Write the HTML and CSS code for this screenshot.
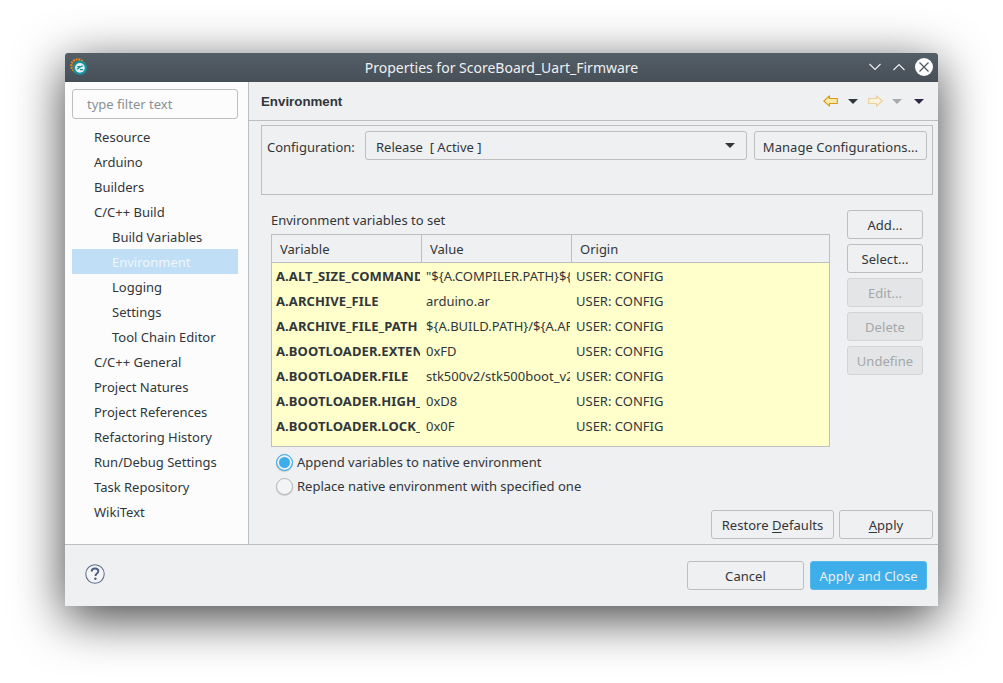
FILE: index.html
```html
<!DOCTYPE html>
<html lang="en">
<head>
    <meta charset="UTF-8">
    <link rel="stylesheet" href="styles.css">
    <title>Properties for ScoreBoard_Uart_Firmware</title>
</head>
<body>
    <div class="window">
        <div class="titlebar">
            <svg class="app_icon" width="18" height="18" viewBox="0 0 20 20">
                <circle cx="8.5" cy="8.5" r="7" fill="none" stroke="#e8891c" stroke-width="2.6" stroke-dasharray="2 1"/>
                <circle cx="11" cy="11" r="8" fill="#17929c"/>
                <circle cx="11" cy="11" r="5.4" fill="#e6f3f4"/>
                <path d="M7.5 12.5 L14 8.5 M8 9.5 h3 M11 13 h3.5" stroke="#17929c" stroke-width="1.4" fill="none"/>
            </svg>
            <span class="title">Properties for ScoreBoard_Uart_Firmware</span>
            <div class="win_btns">
                <svg width="12" height="8" viewBox="0 0 12 8"><path d="M0.5 1 L6 6.5 L11.5 1" fill="none" stroke="#eef1f3" stroke-width="1.1"/></svg>
                <svg class="up" width="12" height="8" viewBox="0 0 12 8"><path d="M0.5 7 L6 1.5 L11.5 7" fill="none" stroke="#eef1f3" stroke-width="1.1"/></svg>
                <svg width="18" height="18" viewBox="0 0 18 18"><circle cx="9" cy="9" r="9" fill="#fcfcfc"/><path d="M4.5 4.5 L13.5 13.5 M13.5 4.5 L4.5 13.5" stroke="#4d5760" stroke-width="1.2"/></svg>
            </div>
        </div>

        <div class="main">
            <div class="sidebar">
                <input class="filter" type="text" placeholder="type filter text">
                <ul class="tree">
                    <li>Resource</li>
                    <li>Arduino</li>
                    <li>Builders</li>
                    <li>C/C++ Build</li>
                    <li class="sub">Build Variables</li>
                    <li class="sub selected">Environment</li>
                    <li class="sub">Logging</li>
                    <li class="sub">Settings</li>
                    <li class="sub">Tool Chain Editor</li>
                    <li>C/C++ General</li>
                    <li>Project Natures</li>
                    <li>Project References</li>
                    <li>Refactoring History</li>
                    <li>Run/Debug Settings</li>
                    <li>Task Repository</li>
                    <li>WikiText</li>
                </ul>
            </div>

            <div class="content">
                <div class="page_head">
                    <h1>Environment</h1>
                    <div class="nav_icons">
                        <svg width="15" height="12" viewBox="0 0 15 12"><path d="M0.8 6 L6.5 0.8 V3.5 H14.3 V8.5 H6.5 V11.2 Z" fill="#fbe9a6" stroke="#d79a1e" stroke-width="1.1" stroke-linejoin="round"/></svg>
                        <i class="caret dark"></i>
                        <svg width="15" height="12" viewBox="0 0 15 12"><path d="M14.2 6 L8.5 0.8 V3.5 H0.7 V8.5 H8.5 V11.2 Z" fill="#faf3dc" stroke="#e8cf9c" stroke-width="1.1" stroke-linejoin="round"/></svg>
                        <i class="caret grey"></i>
                        <i class="caret purple"></i>
                    </div>
                </div>

                <div class="config_group">
                    <label class="config_label">Configuration:</label>
                    <div class="combo">
                        <span>Release&nbsp; [ Active ]</span>
                        <i class="caret dark"></i>
                    </div>
                    <button class="btn manage">Manage Configurations...</button>
                </div>

                <div class="env_section">
                    <div class="env_left">
                        <div class="env_title">Environment variables to set</div>
                        <div class="table">
                            <div class="thead">
                                <div class="th col1">Variable</div>
                                <div class="th col2">Value</div>
                                <div class="th col3">Origin</div>
                            </div>
                            <div class="tbody">
                                <div class="row"><div class="var">A.ALT_SIZE_COMMAND.PATTERN</div><div class="val">"${A.COMPILER.PATH}${A.COMPILER.SIZE}</div><div class="org">USER: CONFIG</div></div>
                                <div class="row"><div class="var">A.ARCHIVE_FILE</div><div class="val">arduino.ar</div><div class="org">USER: CONFIG</div></div>
                                <div class="row"><div class="var">A.ARCHIVE_FILE_PATH</div><div class="val">${A.BUILD.PATH}/${A.ARCHIVE_FILE}</div><div class="org">USER: CONFIG</div></div>
                                <div class="row"><div class="var">A.BOOTLOADER.EXTENDED</div><div class="val">0xFD</div><div class="org">USER: CONFIG</div></div>
                                <div class="row"><div class="var">A.BOOTLOADER.FILE</div><div class="val">stk500v2/stk500boot_v2_mega</div><div class="org">USER: CONFIG</div></div>
                                <div class="row"><div class="var">A.BOOTLOADER.HIGH_FUSES</div><div class="val">0xD8</div><div class="org">USER: CONFIG</div></div>
                                <div class="row"><div class="var">A.BOOTLOADER.LOCK_BITS</div><div class="val">0x0F</div><div class="org">USER: CONFIG</div></div>
                            </div>
                        </div>
                        <div class="radios">
                            <label class="radio_row"><i class="radio on"></i>Append variables to native environment</label>
                            <label class="radio_row"><i class="radio"></i>Replace native environment with specified one</label>
                        </div>
                    </div>
                    <div class="side_btns">
                        <button class="btn">Add...</button>
                        <button class="btn">Select...</button>
                        <button class="btn disabled">Edit...</button>
                        <button class="btn disabled">Delete</button>
                        <button class="btn disabled">Undefine</button>
                    </div>
                </div>

                <div class="page_btns">
                    <button class="btn restore">Restore <u>D</u>efaults</button>
                    <button class="btn apply"><u>A</u>pply</button>
                </div>
            </div>
        </div>

        <div class="footer">
            <svg class="help" width="20" height="20" viewBox="0 0 21 21">
                <circle cx="10.5" cy="10.5" r="9.7" fill="#f4f4f5" stroke="#5b6d8f" stroke-width="1.1"/>
                <path d="M7 8 C7 5.6 8.8 4.8 10.5 4.8 C12.6 4.8 14 6 14 7.7 C14 10 11 10 11 12.5" fill="none" stroke="#4c5f85" stroke-width="2"/>
                <circle cx="10.9" cy="15.6" r="1.3" fill="#4c5f85"/>
            </svg>
            <div class="footer_btns">
                <button class="btn cancel">Cancel</button>
                <button class="btn primary">Apply and Close</button>
            </div>
        </div>
    </div>
</body>
</html>
```

FILE: styles.css
```css
*{
    box-sizing: border-box;
}
body{
    margin: 0;
    height: 683px;
    padding: 53px 65px 0;
    background: #ffffff;
    overflow: hidden;
    font-family: "Noto Sans", sans-serif;
    font-size: 13px;
    color: #31363b;
}
.window{
    width: 873px;
    height: 553px;
    display: flex;
    flex-direction: column;
    background: #eff0f1;
    border-radius: 3px 3px 0 0;
    box-shadow: 0 12px 50px rgba(0,0,0,0.75);
}

/* title bar */
.titlebar{
    height: 29px;
    flex: none;
    display: flex;
    align-items: center;
    justify-content: center;
    position: relative;
    background: linear-gradient(#545e67, #475057);
    border-radius: 3px 3px 0 0;
    color: #eff0f1;
    font-size: 14px;
}
.app_icon{
    position: absolute;
    left: 5px;
    top: 5px;
}
.win_btns{
    position: absolute;
    right: 5px;
    top: 5px;
    display: flex;
    align-items: center;
    gap: 10px;
}
.win_btns .up{
    margin-left: 2px;
}

/* main area */
.main{
    height: 463px;
    flex: none;
    display: flex;
    border-bottom: 1px solid #bcbebf;
}
.sidebar{
    width: 184px;
    flex: none;
    padding: 7px 10px 0 7px;
    background: #fcfcfc;
    border-right: 1px solid #bcbebf;
}
.filter{
    display: block;
    width: 166px;
    height: 30px;
    padding: 0 14px;
    border: 1px solid #bcbebf;
    border-radius: 3px;
    background: #fcfcfc;
    outline: none;
    font: inherit;
}
.filter::placeholder{
    color: #8a9095;
    opacity: 1;
}
.tree{
    list-style: none;
    margin: 5px 0 0;
    padding: 0;
}
.tree li{
    height: 25px;
    line-height: 27px;
    padding-left: 22px;
}
.tree li.sub{
    padding-left: 40px;
}
.tree li.selected{
    background: #c0dff6;
    color: #eff6fc;
}

.content{
    flex: 1;
    min-width: 0;
}
.page_head{
    height: 39px;
    display: flex;
    align-items: center;
    justify-content: space-between;
    padding: 0 13px 0 12px;
    border-bottom: 1px solid #bcbebf;
}
h1{
    margin: 0;
    font-size: 13.3px;
    font-weight: 700;
    font-family: "Liberation Sans", sans-serif;
}
.nav_icons{
    display: flex;
    align-items: center;
}
.nav_icons .caret{
    margin: 0 10px 0 10px;
}
.nav_icons .caret.grey{
    margin: 0 0 0 9px;
}
.nav_icons .caret.purple{
    margin: 0 1px 0 12px;
}
.caret{
    display: inline-block;
    width: 0;
    height: 0;
    border-left: 5px solid transparent;
    border-right: 5px solid transparent;
    border-top: 5px solid #31363b;
}
.caret.grey{
    border-top-color: #a8a9aa;
}
.caret.purple{
    border-top-color: #2f2545;
}

.config_group{
    height: 70px;
    margin: 4px 5px 0 12px;
    padding: 5px 5px 0 5px;
    border: 1px solid #bcbebf;
    display: flex;
    align-items: flex-start;
}
.config_label{
    width: 98px;
    flex: none;
    line-height: 33px;
}
.combo{
    width: 382px;
    height: 29px;
    flex: none;
    display: flex;
    align-items: center;
    justify-content: space-between;
    padding: 2px 11px 0 10px;
    border: 1px solid #bcbebf;
    border-radius: 3px;
}
.combo .caret{
    margin-top: -2px;
}
.btn{
    height: 29px;
    padding: 0;
    border: 1px solid #bcbebf;
    border-radius: 3px;
    background: #eff0f1;
    color: #31363b;
    font: inherit;
    letter-spacing: 0.05px;
}
.btn u{
    text-underline-offset: 2px;
}
.manage{
    width: 173px;
    margin-left: 7px;
    padding-top: 2px;
}

.env_section{
    display: flex;
    margin-top: 14px;
    padding-left: 22px;
}
.env_left{
    width: 559px;
    flex: none;
}
.env_title{
    height: 25px;
    line-height: 22px;
}
.table{
    border: 1px solid #bcbebf;
}
.thead{
    height: 28px;
    display: flex;
    border-bottom: 1px solid #bcbebf;
}
.th{
    line-height: 29px;
    padding-left: 8px;
    border-right: 1px solid #bcbebf;
}
.th.col1, .th.col2{
    width: 150px;
}
.th.col3{
    flex: 1;
    border-right: none;
}
.tbody{
    height: 183px;
    padding-top: 1px;
    background: #ffffcc;
}
.row{
    height: 25px;
    line-height: 25px;
    display: flex;
}
.var{
    width: 148px;
    padding-left: 4px;
    font-weight: 700;
    letter-spacing: 0.1px;
    white-space: nowrap;
    overflow: hidden;
}
.val{
    width: 144px;
    margin-left: 6px;
    white-space: nowrap;
    overflow: hidden;
}
.org{
    margin-left: 6px;
    white-space: nowrap;
}
.radios{
    margin-top: 3px;
    padding-left: 5px;
}
.radio_row{
    height: 24px;
    display: flex;
    align-items: center;
}
.radio{
    width: 17px;
    height: 17px;
    margin-right: 4px;
    flex: none;
    border: 1px solid #b4b6b8;
    border-radius: 50%;
    background: #f3f4f4;
    box-shadow: 0 1px 1px rgba(0,0,0,0.15);
}
.radio.on{
    border-color: #3daee9;
    background: #3daee9;
    box-shadow: inset 0 0 0 2px #eff0f1, 0 1px 1px rgba(0,0,0,0.15);
}
.side_btns{
    width: 76px;
    margin-left: 17px;
    display: flex;
    flex-direction: column;
    gap: 5px;
    margin-top: 1px;
}
.side_btns .btn{
    width: 76px;
}
.btn.disabled{
    background: #e3e5e6;
    border-color: #d2d4d5;
    color: #a4a8ab;
}

.page_btns{
    display: flex;
    justify-content: flex-end;
    gap: 5px;
    margin-top: 12px;
    padding-right: 5px;
}
.restore{
    width: 123px;
}
.apply{
    width: 94px;
}

.footer{
    flex: 1;
    display: flex;
    align-items: center;
    justify-content: space-between;
    padding: 0 11px 0 20px;
}
.help{
    margin-top: -3px;
}
.footer_btns{
    display: flex;
    gap: 6px;
}
.cancel{
    width: 117px;
    padding-top: 1px;
}
.primary{
    width: 117px;
    padding-top: 1px;
    background: #3daee9;
    border-color: #58b8ea;
    color: #eff0f1;
}
```
